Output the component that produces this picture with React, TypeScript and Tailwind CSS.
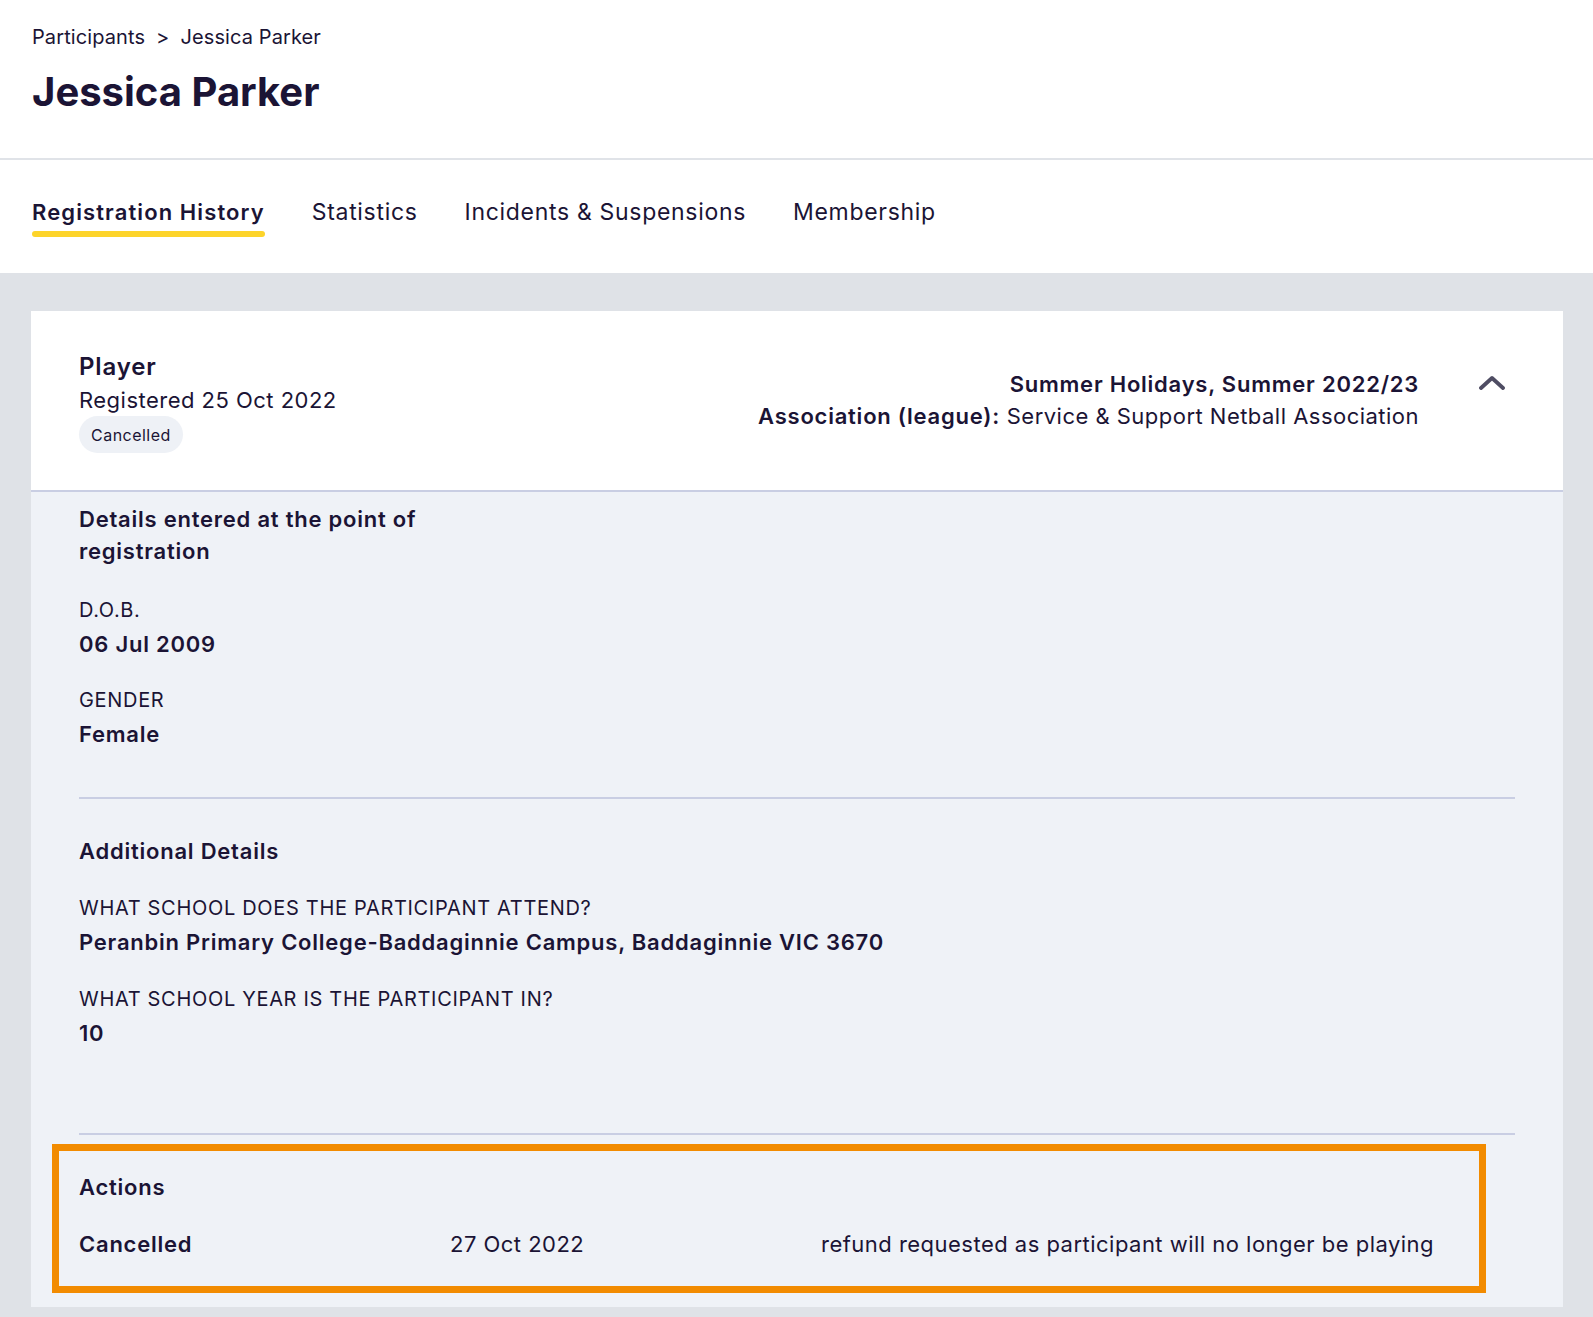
const ink = "text-[#1b1435]";
const strong = "font-semibold tracking-[0.035em]";

const Field = ({ label, value }: { label: string; value: string }) => (
  <div className="flex flex-col gap-[4px]">
    <span className="text-[20px] leading-[28px] tracking-[0.034em]">{label}</span>
    <span className={`text-[22px] leading-[32px] ${strong}`}>{value}</span>
  </div>
);

export default function App() {
  const tabs = ["Registration History", "Statistics", "Incidents & Suspensions", "Membership"];

  return (
    <div
      className={`min-h-screen bg-[#dfe2e7] tracking-[0.03em] ${ink}`}
      style={{ fontFamily: "Inter, 'Noto Sans', sans-serif" }}
    >
      {/* Page header */}
      <div className="bg-white px-[32px] pt-[23px] pb-[42px] border-b-2 border-[#e0e3e8]">
        <div className="flex items-center gap-[11px] text-[20px] leading-[28px] tracking-[0.005em]">
          <span>Participants</span>
          <span>&gt;</span>
          <span>Jessica Parker</span>
        </div>
        <h1 className="mt-[17px] text-[40px] leading-[48px] font-bold tracking-[0em]">Jessica Parker</h1>
      </div>

      {/* Tabs */}
      <div className="bg-white px-[32px] pt-[36px] pb-[36px] flex gap-[47px]">
        {tabs.map((t, i) => (
          <div key={t} className="flex flex-col">
            <span
              className={`leading-[32px] ${
                i === 0 ? "text-[22px] font-semibold tracking-[0.05em]" : "text-[23px] tracking-[0.03em]"
              }`}
            >
              {t}
            </span>
            <span className={`mt-[3px] h-[6px] rounded-full ${i === 0 ? "bg-[#fdd42a]" : "bg-transparent"}`} />
          </div>
        ))}
      </div>

      {/* Registration card */}
      <div className="pt-[38px] pl-[31px] pr-[30px] pb-[12px]">
        <div className="bg-[#eff2f7]">
          <div className="bg-white border-b-2 border-[#c9cee3] pl-[48px] pr-[58px] pt-[38px] pb-[37px] flex justify-between">
            <div className="flex flex-col items-start">
              <span className={`text-[24px] leading-[35px] ${strong}`}>Player</span>
              <span className="text-[22px] leading-[32px]">Registered 25 Oct 2022</span>
              <span className="h-[37px] px-[12px] flex items-center rounded-full bg-[#eef1f6] text-[16px]">Cancelled</span>
            </div>
            <div className="flex items-start gap-[60px] pt-[19px]">
              <div className="flex flex-col items-end text-[22px] leading-[32px]">
                <span className={strong}>Summer Holidays, Summer 2022/23</span>
                <span>
                  <span className={strong}>Association (league):</span> Service &amp; Support Netball Association
                </span>
              </div>
              <svg width="26" height="15" viewBox="0 0 26 15" className="mt-[7px]">
                <polyline points="2,13 13,3 24,13" fill="none" stroke="#4f4d63" strokeWidth="3.8" strokeLinecap="round" strokeLinejoin="round" />
              </svg>
            </div>
          </div>

          <div className="pt-[11px] pb-[14px]">
            <div className="px-[48px]">
              <h3 className={`text-[22px] leading-[32px] w-[360px] ${strong}`}>Details entered at the point of registration</h3>
              <div className="mt-[29px] flex flex-col gap-[26px]">
                <Field label="D.O.B." value="06 Jul 2009" />
                <Field label="GENDER" value="Female" />
              </div>
              <div className="mt-[47px] h-[2px] bg-[#c9cee3]" />
              <h3 className={`mt-[36px] text-[22px] leading-[32px] ${strong}`}>Additional Details</h3>
              <div className="mt-[27px] flex flex-col gap-[27px]">
                <Field label="WHAT SCHOOL DOES THE PARTICIPANT ATTEND?" value="Peranbin Primary College-Baddaginnie Campus, Baddaginnie VIC 3670" />
                <Field label="WHAT SCHOOL YEAR IS THE PARTICIPANT IN?" value="10" />
              </div>
              <div className="mt-[84px] h-[2px] bg-[#c9cee3]" />
            </div>

            {/* Actions */}
            <div className="mt-[9px] ml-[21px] mr-[77px] border-[7px] border-[#f28b00] pl-[20px] pr-[20px] pt-[20px] pb-[26px]">
              <div className={`text-[22px] leading-[32px] ${strong}`}>Actions</div>
              <div className="mt-[25px] flex text-[22px] leading-[32px]">
                <span className={`w-[371px] ${strong}`}>Cancelled</span>
                <span className="w-[371px]">27 Oct 2022</span>
                <span>refund requested as participant will no longer be playing</span>
              </div>
            </div>
          </div>
        </div>
      </div>
    </div>
  );
}
